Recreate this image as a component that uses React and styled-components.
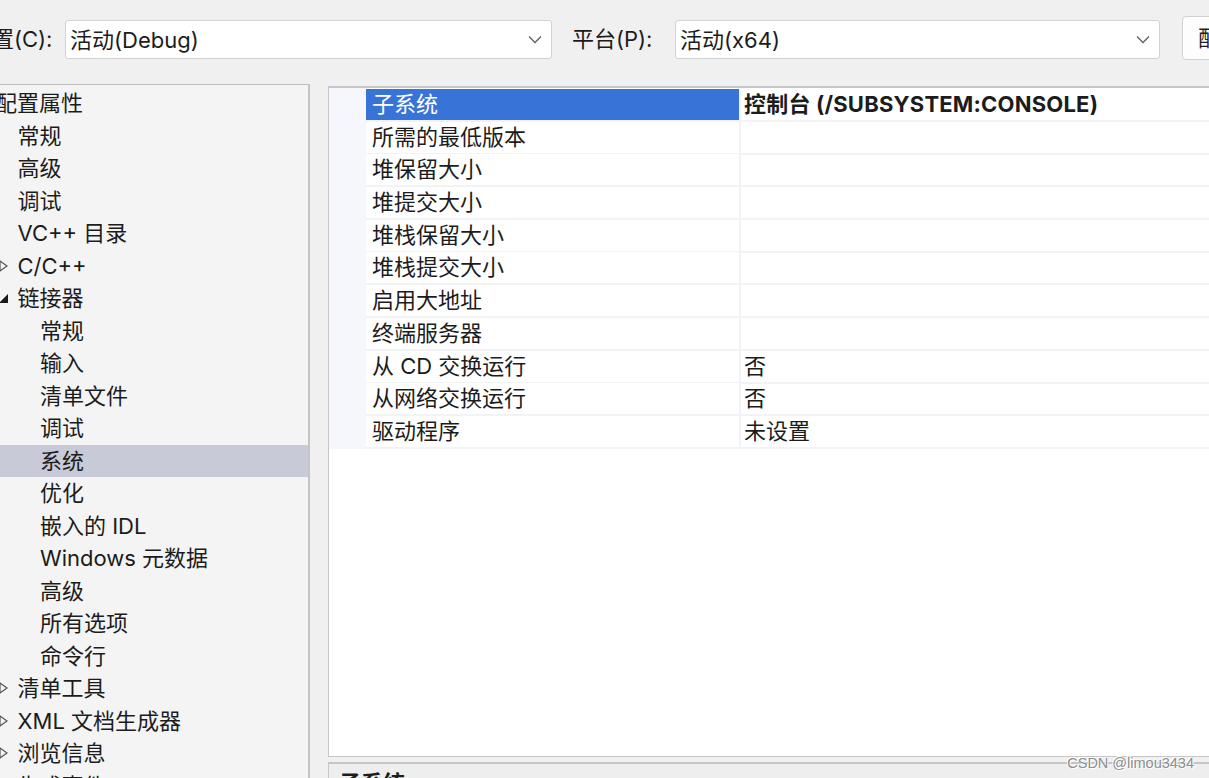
import React from "react";
import styled, { createGlobalStyle } from "styled-components";

const Global = createGlobalStyle`
  html, body { margin: 0; padding: 0; background: #f0f0f0; overflow: hidden; }
  * { box-sizing: border-box; }
`;

const FONT = `Inter, "Noto Sans CJK SC", sans-serif`;

const Root = styled.div`
  position: relative;
  width: 1209px;
  height: 778px;
  overflow: hidden;
  background: #f0f0f0;
  font-family: ${FONT};
  font-size: 22px;
  color: #1c1c1c;
`;

const Toolbar = styled.div`
  display: flex;
  align-items: flex-start;
  height: 84px;
  padding-top: 20px;
  margin-left: -30px;
  white-space: nowrap;
`;

const FieldLabel = styled.div`
  flex: none;
  width: ${(p) => p.$w}px;
  margin-left: ${(p) => p.$ml || 0}px;
  height: 39px;
  line-height: 38px;
`;

const Combo = styled.div`
  flex: none;
  display: flex;
  align-items: center;
  justify-content: space-between;
  width: ${(p) => p.$w}px;
  height: 39px;
  padding: 0 9px 0 4px;
  background: #ffffff;
  border: 1px solid #d2d2d2;
  border-radius: 3px;
`;

const ComboText = styled.span`
  line-height: 36px;
`;

const ManagerButton = styled.div`
  flex: none;
  margin-left: 22px;
  margin-top: -4px;
  width: 220px;
  height: 44px;
  padding-left: 15px;
  line-height: 42px;
  background: #fdfdfd;
  border: 1px solid #d0d0d0;
  border-radius: 4px;
`;

const Body = styled.div`
  display: flex;
  align-items: flex-start;
  height: 694px;
`;

const TreePanel = styled.div`
  flex: none;
  margin-left: -40px;
  width: 350px;
  height: 760px;
  padding: 2px 0 0 14px;
  background: #f4f4f4;
  border-top: 1px solid #bdbdbd;
  border-right: 2px solid #c4c4c4;
  overflow: hidden;
`;

const TreeRow = styled.div`
  display: flex;
  align-items: center;
  height: 32.5px;
  margin-left: -14px;
  padding-left: ${(p) => 13 + p.$level * 22.5}px;
  background: ${(p) => (p.$selected ? "#c9cad7" : "transparent")};
  white-space: nowrap;
`;

const Expander = styled.span`
  flex: none;
  display: flex;
  align-items: center;
  width: 22px;
  height: 100%;
  padding-left: 3px;
`;

const TreeText = styled.span`
  line-height: 32px;
`;

const RightColumn = styled.div`
  flex: none;
  display: flex;
  flex-direction: column;
  margin-left: 18px;
  margin-top: 2px;
  width: 900px;
`;

const GridPanel = styled.div`
  height: 671px;
  background: #ffffff;
  border: 1px solid #c6c6c6;
  border-right: none;
  border-top: 2px solid #c6c6c6;
`;

const Grid = styled.div`
  padding-top: 1px;
  background: linear-gradient(to right, #f5f7fc 37px, #ffffff 37px);
`;

const PropRow = styled.div`
  display: grid;
  grid-template-columns: 37px 373px 1fr;
  height: 32.7px;
`;

const Margin = styled.div`
  background: #f5f7fc;
`;

const NameCell = styled.div`
  padding-left: 6px;
  line-height: 31px;
  border-bottom: 2px solid #f2f3f6;
  background: ${(p) => (p.$selected ? "#3874d8" : "#ffffff")};
  color: ${(p) => (p.$selected ? "#ffffff" : "#1c1c1c")};
  white-space: nowrap;
`;

const ValueCell = styled.div`
  padding-left: 3px;
  line-height: 31px;
  border-left: 2px solid #f2f3f6;
  border-bottom: 2px solid #f2f3f6;
  font-weight: ${(p) => (p.$bold ? 700 : 400)};
  letter-spacing: ${(p) => (p.$bold ? "0.2px" : "0")};
  white-space: nowrap;
`;

const DescPanel = styled.div`
  margin-top: 5px;
  height: 80px;
  padding: 4px 10px;
  background: #eeeeee;
  border: 1px solid #c6c6c6;
  border-top: 2px solid #c6c6c6;
  border-right: none;
`;

const DescTitle = styled.div`
  font-weight: 700;
  line-height: 30px;
`;

const Watermark = styled.div`
  position: absolute;
  right: 15px;
  bottom: 7px;
  font-family: "Liberation Sans", Arial, sans-serif;
  font-size: 14.5px;
  color: #8d8d8d;
  text-shadow: 1px 1px 0 #ffffff, -1px -1px 0 #ffffff;
  white-space: nowrap;
`;

const Chevron = () => (
  <svg width="14" height="9" viewBox="0 0 14 9">
    <polyline points="1,1.5 7,7.5 13,1.5" fill="none" stroke="#5f5f5f" strokeWidth="1.3" />
  </svg>
);

const CollapsedGlyph = () => (
  <svg width="10" height="14" viewBox="0 0 10 14">
    <polygon points="1,2 8,7 1,12" fill="none" stroke="#555" strokeWidth="1.2" />
  </svg>
);

const ExpandedGlyph = () => (
  <svg width="10" height="14" viewBox="0 0 10 14">
    <polygon points="9,3 9,12 0,12" fill="#1a1a1a" />
  </svg>
);

const tree = [
  { t: "配置属性", l: 0, e: "open" },
  { t: "常规", l: 1 },
  { t: "高级", l: 1 },
  { t: "调试", l: 1 },
  { t: "VC++ 目录", l: 1 },
  { t: "C/C++", l: 1, e: "closed" },
  { t: "链接器", l: 1, e: "open" },
  { t: "常规", l: 2 },
  { t: "输入", l: 2 },
  { t: "清单文件", l: 2 },
  { t: "调试", l: 2 },
  { t: "系统", l: 2, s: true },
  { t: "优化", l: 2 },
  { t: "嵌入的 IDL", l: 2 },
  { t: "Windows 元数据", l: 2 },
  { t: "高级", l: 2 },
  { t: "所有选项", l: 2 },
  { t: "命令行", l: 2 },
  { t: "清单工具", l: 1, e: "closed" },
  { t: "XML 文档生成器", l: 1, e: "closed" },
  { t: "浏览信息", l: 1, e: "closed" },
  { t: "生成事件", l: 1, e: "closed" },
];

const props = [
  { n: "子系统", v: "控制台 (/SUBSYSTEM:CONSOLE)", s: true, b: true },
  { n: "所需的最低版本", v: "" },
  { n: "堆保留大小", v: "" },
  { n: "堆提交大小", v: "" },
  { n: "堆栈保留大小", v: "" },
  { n: "堆栈提交大小", v: "" },
  { n: "启用大地址", v: "" },
  { n: "终端服务器", v: "" },
  { n: "从 CD 交换运行", v: "否" },
  { n: "从网络交换运行", v: "否" },
  { n: "驱动程序", v: "未设置" },
];

export default function App() {
  return (
    <Root>
      <Global />
      <Toolbar>
        <FieldLabel $w={95}>配置(C):</FieldLabel>
        <Combo $w={487}>
          <ComboText>活动(Debug)</ComboText>
          <Chevron />
        </Combo>
        <FieldLabel $w={103} $ml={20}>平台(P):</FieldLabel>
        <Combo $w={485}>
          <ComboText>活动(x64)</ComboText>
          <Chevron />
        </Combo>
        <ManagerButton>配置管理器(O)...</ManagerButton>
      </Toolbar>
      <Body>
        <TreePanel>
          {tree.map((it, i) => (
            <TreeRow key={i} $level={it.l} $selected={it.s}>
              <Expander>
                {it.e === "open" && <ExpandedGlyph />}
                {it.e === "closed" && <CollapsedGlyph />}
              </Expander>
              <TreeText>{it.t}</TreeText>
            </TreeRow>
          ))}
        </TreePanel>
        <RightColumn>
          <GridPanel>
            <Grid>
              {props.map((p, i) => (
                <PropRow key={i}>
                  <Margin />
                  <NameCell $selected={p.s}>{p.n}</NameCell>
                  <ValueCell $bold={p.b}>{p.v}</ValueCell>
                </PropRow>
              ))}
            </Grid>
          </GridPanel>
          <DescPanel>
            <DescTitle>子系统</DescTitle>
          </DescPanel>
        </RightColumn>
      </Body>
      <Watermark>CSDN @limou3434</Watermark>
    </Root>
  );
}
